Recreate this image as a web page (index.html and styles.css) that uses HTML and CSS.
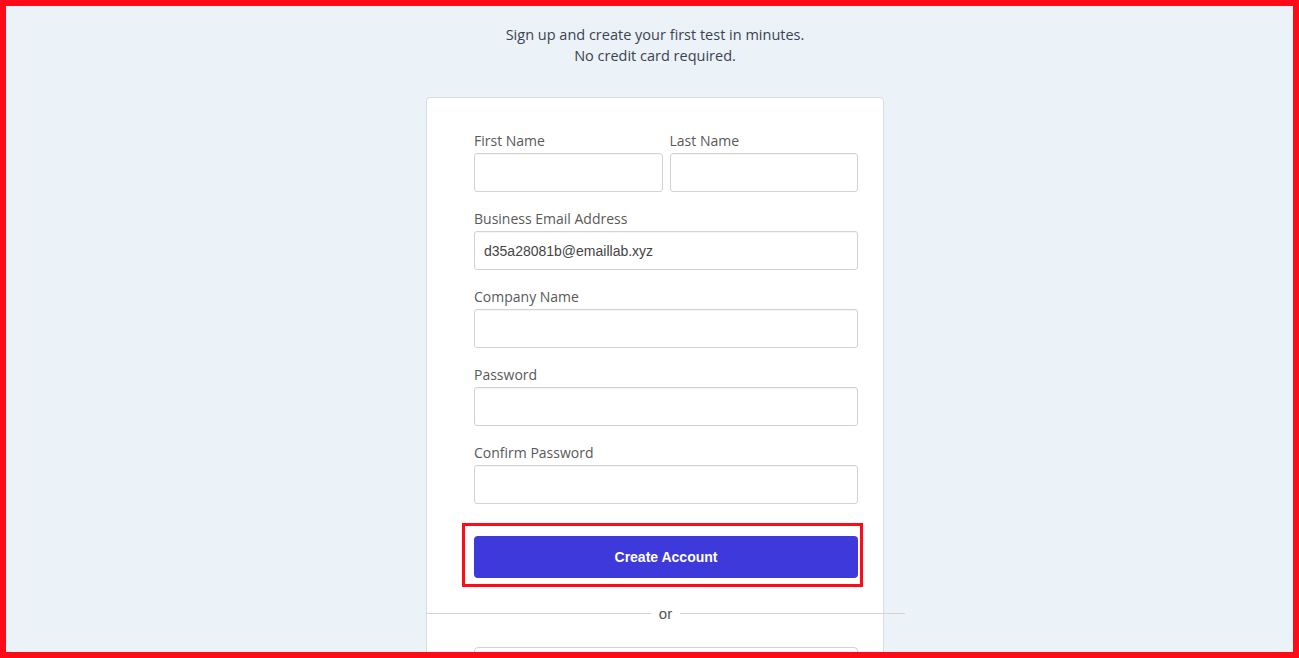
FILE: index.html
```html
<!DOCTYPE html>
<html lang="en">
<head>
    <meta charset="UTF-8">
    <meta name="viewport" content="width=device-width, initial-scale=1.0">
    <title>Sign up</title>
    <link rel="stylesheet" href="styles.css">
</head>
<body>

    <div class="frame"></div>

    <main class="page">
        <p class="intro">Sign up and create your first test in minutes.<br>No credit card required.</p>

        <div class="card">
            <form class="signup">
                <div class="row">
                    <div class="field">
                        <label for="first">First Name</label>
                        <input id="first" type="text">
                    </div>
                    <div class="field">
                        <label for="last">Last Name</label>
                        <input id="last" type="text">
                    </div>
                </div>

                <div class="field">
                    <label for="email">Business Email Address</label>
                    <input id="email" type="email" value="d35a28081b@emaillab.xyz">
                </div>

                <div class="field">
                    <label for="company">Company Name</label>
                    <input id="company" type="text">
                </div>

                <div class="field">
                    <label for="password">Password</label>
                    <input id="password" type="password">
                </div>

                <div class="field">
                    <label for="confirm">Confirm Password</label>
                    <input id="confirm" type="password">
                </div>

                <!-- Submit -->
                <div class="submit-wrap">
                    <button type="submit">Create Account</button>
                    <span class="highlight"></span>
                </div>

                <div class="divider">
                    <span class="line"></span>
                    <span class="or">or</span>
                    <span class="line"></span>
                </div>

                <div class="sso"></div>
            </form>
        </div>
    </main>

</body>
</html>
```

FILE: styles.css
```css
html, body {
    margin: 0;
    height: 100%;
    overflow: hidden;
    background-color: #ebf2f8;
    font-family: 'Open Sans', 'Noto Sans', sans-serif;
}

.frame {
    position: fixed;
    inset: 0;
    border: 6px solid #ff0a17;
    pointer-events: none;
    z-index: 10;
}

.page {
    padding: 24px 0 0 11px;
    display: flex;
    flex-direction: column;
    align-items: center;
}

.intro {
    margin: 0 0 31px;
    font-size: 14.5px;
    line-height: 21px;
    color: #3b4252;
    text-align: center;
}

.card {
    width: 458px;
    box-sizing: border-box;
    background-color: #ffffff;
    border: 1px solid #d9dde2;
    border-radius: 4px;
    padding: 32px 25px 0 47px;
}

.signup {
    display: flex;
    flex-direction: column;
}

.row {
    display: flex;
    gap: 7px;
}

.row .field {
    flex: 1;
    min-width: 0;
}

.field {
    display: flex;
    flex-direction: column;
    margin-bottom: 16px;
}

.field label {
    font-size: 14px;
    line-height: 20px;
    padding-top: 1px;
    color: #595959;
    margin-bottom: 2px;
}

.field input {
    width: 100%;
    min-width: 0;
    height: 39px;
    box-sizing: border-box;
    border: 1px solid #d2d2d2;
    border-radius: 3px;
    box-shadow: inset 0 1px 1px rgba(0, 0, 0, 0.04);
    padding: 0 9px;
    font-family: 'Liberation Sans', Arial, sans-serif;
    font-size: 14px;
    color: #444444;
    background-color: #ffffff;
}

.submit-wrap {
    position: relative;
    margin-top: 16px;
}

.submit-wrap button {
    width: 100%;
    height: 42px;
    border: none;
    border-radius: 4px;
    background-color: #3d39db;
    color: #ffffff;
    font-family: 'Liberation Sans', Arial, sans-serif;
    font-size: 14px;
    font-weight: bold;
    cursor: pointer;
}

.highlight {
    position: absolute;
    top: -13px;
    bottom: -9px;
    left: -12px;
    right: -5px;
    border: 3px solid #ff0a17;
    pointer-events: none;
}

.divider {
    display: flex;
    align-items: center;
    margin: 25px -47px 0 -48px;
    height: 20px;
}

.divider .line {
    flex: 1;
    height: 1px;
    background-color: #d4d4d4;
}

.divider .or {
    padding: 0 8px;
    font-family: 'Liberation Sans', Arial, sans-serif;
    font-size: 15px;
    color: #555555;
}

.sso {
    margin-top: 24px;
    height: 40px;
    border: 1px solid #d2d2d2;
    border-radius: 4px;
}
```
